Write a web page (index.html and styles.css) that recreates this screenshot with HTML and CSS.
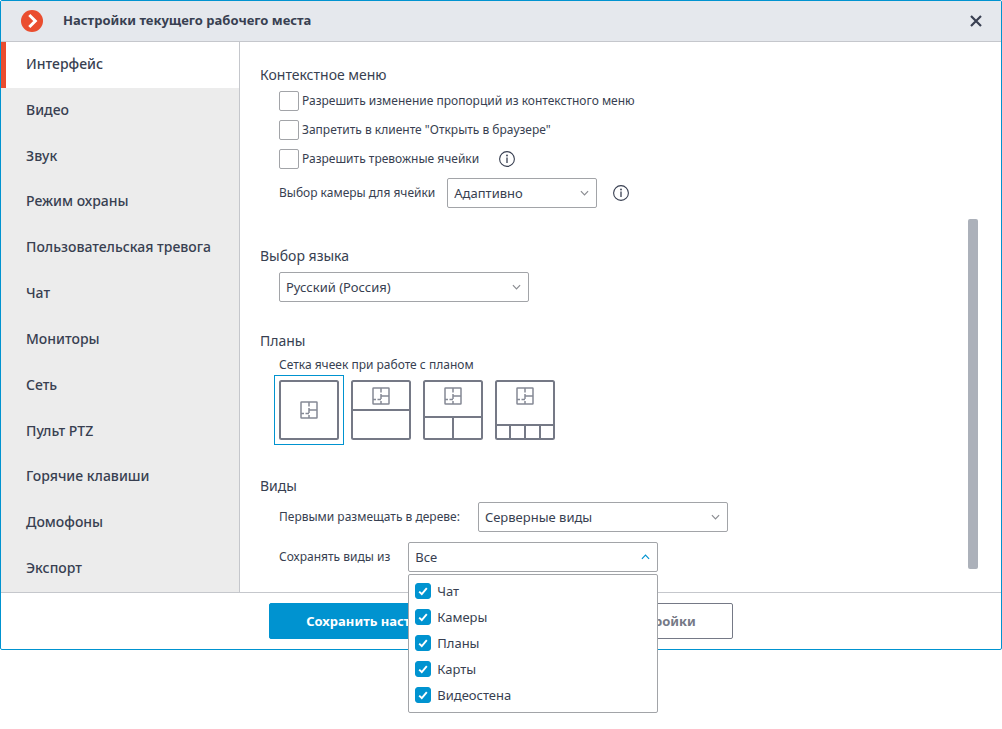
FILE: index.html
```html
<!DOCTYPE html>
<html lang="ru">
<head>
<meta charset="utf-8">
<meta name="viewport" content="width=device-width, initial-scale=1">
<title>Настройки текущего рабочего места</title>
<link rel="stylesheet" href="styles.css">
</head>
<body>
<svg class="defs" aria-hidden="true">
  <symbol id="chevron" viewBox="0 0 10 6"><path d="M1 1l4 4 4-4" fill="none" stroke="currentColor" stroke-width="1.3"/></symbol>
  <symbol id="info" viewBox="0 0 16 16"><circle cx="8" cy="8" r="7.400" fill="none" stroke="currentColor" stroke-width="1.100"/><path d="M8 6.500V12" stroke="currentColor" stroke-width="1.300"/><circle cx="8" cy="4.500" r="0.900" fill="currentColor"/></symbol>
  <symbol id="plan" viewBox="0 0 18 18"><g fill="none" stroke="currentColor" stroke-width="1.500"><rect x="1" y="1" width="16" height="16" rx="0.500"/><path d="M9 1v4.500M9 7v5M9 14v3M9 9h8M1 12.500h3M5.500 12.500H9"/></g></symbol>
</svg>
<main class="dialog">
  <header class="dialog-header">
    <svg class="logo" viewBox="0 0 22 22" aria-hidden="true"><circle cx="11" cy="11" r="11" fill="#ea4d2f"/><path d="M8.300 5l6 6-6 6" fill="none" stroke="#fff" stroke-width="3"/></svg>
    <h1 class="dialog-title">Настройки текущего рабочего места</h1>
    <button class="close" type="button" aria-label="Закрыть"><svg class="close-icon" viewBox="0 0 12 12"><path d="M1 1l10 10M11 1L1 11" stroke="currentColor" stroke-width="2.200"/></svg></button>
  </header>
  <div class="dialog-body">
    <nav class="sidebar">
      <a class="nav-item active" href="#" aria-current="page">Интерфейс</a>
      <a class="nav-item" href="#">Видео</a>
      <a class="nav-item" href="#">Звук</a>
      <a class="nav-item" href="#">Режим охраны</a>
      <a class="nav-item" href="#">Пользовательская тревога</a>
      <a class="nav-item" href="#">Чат</a>
      <a class="nav-item" href="#">Мониторы</a>
      <a class="nav-item" href="#">Сеть</a>
      <a class="nav-item" href="#">Пульт PTZ</a>
      <a class="nav-item" href="#">Горячие клавиши</a>
      <a class="nav-item" href="#">Домофоны</a>
      <a class="nav-item" href="#">Экспорт</a>
    </nav>
    <div class="content">
      <section class="section section-menu">
        <h2 class="section-title">Контекстное меню</h2>
        <div class="section-body">
          <div class="check-list">
            <div class="check-row"><label class="check"><input class="box" type="checkbox">Разрешить изменение пропорций из контекстного меню</label></div>
            <div class="check-row"><label class="check"><input class="box" type="checkbox">Запретить в клиенте "Открыть в браузере"</label></div>
            <div class="check-row"><label class="check"><input class="box" type="checkbox">Разрешить тревожные ячейки</label><svg class="info" aria-hidden="true"><use href="#info"/></svg></div>
          </div>
          <div class="field field-camera">
            <label for="camera">Выбор камеры для ячейки</label>
            <span class="select select-short"><select id="camera"><option>Адаптивно</option></select><svg class="chevron" aria-hidden="true"><use href="#chevron"/></svg></span>
            <svg class="info info-camera" aria-hidden="true"><use href="#info"/></svg>
          </div>
        </div>
      </section>
      <section class="section">
        <h2 class="section-title" id="language-title">Выбор языка</h2>
        <div class="section-body">
          <span class="select"><select aria-labelledby="language-title"><option>Русский (Россия)</option></select><svg class="chevron" aria-hidden="true"><use href="#chevron"/></svg></span>
        </div>
      </section>
      <section class="section section-plans">
        <h2 class="section-title">Планы</h2>
        <div class="section-body" role="radiogroup" aria-labelledby="grid-label">
          <p class="caption" id="grid-label">Сетка ячеек при работе с планом</p>
          <div class="grids">
            <label class="grid-option"><input class="grid-radio" type="radio" name="grid" aria-label="Одна ячейка" checked>
              <svg class="grid-picture" viewBox="0 0 60 60"><rect x="1" y="1" width="58" height="58" rx="1.500"/><use href="#plan" x="21" y="21" width="18" height="18"/></svg></label>
            <label class="grid-option"><input class="grid-radio" type="radio" name="grid" aria-label="План и одна ячейка">
              <svg class="grid-picture" viewBox="0 0 60 60"><rect x="1" y="1" width="58" height="58" rx="1.500"/><path d="M1 30h58"/><use href="#plan" x="21" y="7" width="18" height="18"/></svg></label>
            <label class="grid-option"><input class="grid-radio" type="radio" name="grid" aria-label="План и две ячейки">
              <svg class="grid-picture" viewBox="0 0 60 60"><rect x="1" y="1" width="58" height="58" rx="1.500"/><path d="M1 37h58M30 37v22"/><use href="#plan" x="21" y="7" width="18" height="18"/></svg></label>
            <label class="grid-option"><input class="grid-radio" type="radio" name="grid" aria-label="План и четыре ячейки">
              <svg class="grid-picture" viewBox="0 0 60 60"><rect x="1" y="1" width="58" height="58" rx="1.500"/><path d="M1 45h58M15 45v14M30 45v14M45 45v14"/><use href="#plan" x="21" y="7" width="18" height="18"/></svg></label>
          </div>
        </div>
      </section>
      <section class="section">
        <h2 class="section-title">Виды</h2>
        <div class="section-body view-fields">
          <div class="field">
            <label for="order">Первыми размещать в дереве:</label>
            <span class="select"><select id="order"><option>Серверные виды</option></select><svg class="chevron" aria-hidden="true"><use href="#chevron"/></svg></span>
          </div>
          <div class="field">
            <span id="save-label">Сохранять виды из</span>
            <div class="multi">
              <button class="multi-button" type="button" aria-labelledby="save-label save-value" aria-expanded="true"><span id="save-value">Все</span><svg class="chevron-open" aria-hidden="true"><use href="#chevron"/></svg></button>
              <div class="menu">
                <label class="menu-item"><input class="tick" type="checkbox" checked>Чат</label>
                <label class="menu-item"><input class="tick" type="checkbox" checked>Камеры</label>
                <label class="menu-item"><input class="tick" type="checkbox" checked>Планы</label>
                <label class="menu-item"><input class="tick" type="checkbox" checked>Карты</label>
                <label class="menu-item"><input class="tick" type="checkbox" checked>Видеостена</label>
              </div>
            </div>
          </div>
        </div>
      </section>
    </div>
    <div class="scrollbar" aria-hidden="true"><div class="scroll-thumb"></div></div>
  </div>
  <footer class="dialog-footer">
    <button class="button primary" type="button">Сохранить настройки</button>
    <button class="button" type="button">Сбросить настройки</button>
  </footer>
</main>
</body>
</html>
```
FILE: styles.css
```css
* {
  box-sizing: border-box;
}

body {
  min-height: 100vh;
  margin: 0;
  background: #fff;
  color: #383f51;
  font: 13px/20px "Noto Sans", "Open Sans", sans-serif;
}

button,
input,
select {
  margin: 0;
  color: inherit;
  font: inherit;
}

.defs {
  display: none;
}

.dialog {
  border: 1px solid #0093d0;
  border-radius: 2px;
}

.dialog-header {
  display: flex;
  align-items: center;
  height: 41px;
  padding: 0 16px 0 20px;
  border-bottom: 1px solid #c5c7cc;
  background: #e5e8ed;
}

.logo {
  width: 22px;
  height: 22px;
}

.dialog-title {
  flex: 1;
  margin: 0 0 0 20px;
  padding-bottom: 2px;
  font-size: 13px;
  font-weight: 700;
}

.close {
  display: flex;
  padding: 3px;
  border: 0;
  background: none;
}

.close-icon {
  width: 12px;
  height: 12px;
}

.dialog-body {
  display: flex;
}

.sidebar {
  display: flex;
  flex: 0 0 239px;
  flex-direction: column;
  border-right: 1px solid #c5c7cc;
  background: #ececec;
}

.nav-item {
  display: flex;
  flex: 1;
  align-items: center;
  padding: 0 0 2px 25px;
  font-size: 14px;
  font-weight: 500;
  color: inherit;
  text-decoration: none;
  white-space: nowrap;
}

.nav-item.active {
  padding-left: 20px;
  border-left: 5px solid #ea4d2f;
  background: #fff;
}

.content {
  flex: 1;
  padding: 23px 20px 20px;
}

.section {
  margin-bottom: 29px;
}

.section:last-child {
  margin-bottom: 0;
}

.section-menu {
  margin-bottom: 38px;
}

.section-title {
  margin: 0 0 6px;
  font-size: 14px;
  font-weight: 400;
}

.section-body {
  padding-left: 19px;
}

.check-list {
  display: flex;
  flex-direction: column;
  gap: 9px;
}

.check-row,
.check {
  display: flex;
  align-items: center;
}

.check-row {
  gap: 20px;
}

.check {
  gap: 3px;
  font-size: 12px;
}

.box {
  width: 20px;
  height: 20px;
  border: 1px solid #a2a4a8;
  border-radius: 2px;
  background: #fff;
  appearance: none;
}

.box:checked {
  background: #0093d0;
}

.info {
  width: 16px;
  height: 16px;
}

.field {
  display: flex;
  align-items: center;
  gap: 18px;
  font-size: 12px;
}

.field-camera {
  gap: 12px;
  margin-top: 9px;
}

.info-camera {
  margin-left: 4px;
}

.select {
  display: inline-grid;
  align-items: center;
  width: 250px;
  vertical-align: top;
}

.select-short {
  width: 150px;
}

.select select {
  grid-area: 1 / 1;
  width: 100%;
  height: 30px;
  padding: 0 24px 0 6px;
  border: 1px solid #a2a4a8;
  border-radius: 2px;
  background: #fff;
  font-size: 13px;
  appearance: none;
}

.chevron {
  grid-area: 1 / 1;
  justify-self: end;
  width: 9px;
  height: 6px;
  margin-right: 8px;
  color: #8a8c91;
  pointer-events: none;
}

.section-plans {
  margin-bottom: 31px;
}

.section-plans .section-title {
  margin-bottom: 4px;
}

.caption {
  margin: 0;
  font-size: 12px;
}

.grids {
  display: flex;
  gap: 2px;
  margin-left: -5px;
}

.grid-option {
  display: grid;
  padding: 4px;
  border: 1px solid transparent;
}

.grid-option:has(:checked) {
  border-color: #0093d0;
}

.grid-radio {
  grid-area: 1 / 1;
  width: 60px;
  height: 60px;
  appearance: none;
}

.grid-picture {
  grid-area: 1 / 1;
  width: 60px;
  height: 60px;
  fill: none;
  stroke: #757986;
  stroke-width: 2;
  color: #858995;
  pointer-events: none;
}

.view-fields {
  display: flex;
  flex-direction: column;
  gap: 10px;
}

.multi {
  position: relative;
  width: 250px;
}

.multi-button {
  display: flex;
  align-items: center;
  justify-content: space-between;
  width: 100%;
  height: 30px;
  padding: 0 7px 1px 6px;
  border: 1px solid #a2a4a8;
  border-radius: 2px;
  background: #fff;
  font-size: 13px;
}

.chevron-open {
  width: 9px;
  height: 6px;
  color: #0093d0;
  transform: rotate(180deg);
}

.menu {
  position: absolute;
  z-index: 1;
  top: 100%;
  left: 0;
  width: 100%;
  margin-top: 2px;
  padding: 3px 6px 4px;
  border: 1px solid #a2a4a8;
  border-radius: 2px;
  background: #fff;
}

.menu-item {
  display: flex;
  align-items: center;
  gap: 6px;
  height: 26px;
  font-size: 13px;
}

.tick {
  width: 16px;
  height: 16px;
  border: 1px solid #0093d0;
  border-radius: 3px;
  appearance: none;
}

.tick:checked {
  background: #0093d0 url("data:image/svg+xml,%3Csvg xmlns='http://www.w3.org/2000/svg' viewBox='0 0 14 14'%3E%3Cpath d='M3.200 7.600l2.600 2.600 5-6' fill='none' stroke='white' stroke-width='1.900'/%3E%3C/svg%3E");
}

.scrollbar {
  display: flex;
  flex-direction: column;
  justify-content: flex-end;
  padding: 0 23px 23px 0;
}

.scroll-thumb {
  width: 10px;
  height: 350px;
  border-radius: 2px;
  background: #acb1ba;
}

.dialog-footer {
  display: flex;
  justify-content: center;
  gap: 32px;
  padding: 10px;
  border-top: 1px solid #c5c7cc;
}

.button {
  height: 36px;
  padding: 0 36px;
  border: 1px solid #757986;
  border-radius: 2px;
  background: #fff;
  color: #757986;
  font-size: 13px;
  font-weight: 700;
}

.button.primary {
  border-color: #0093d0;
  background: #0093d0;
  color: #fff;
}
```
